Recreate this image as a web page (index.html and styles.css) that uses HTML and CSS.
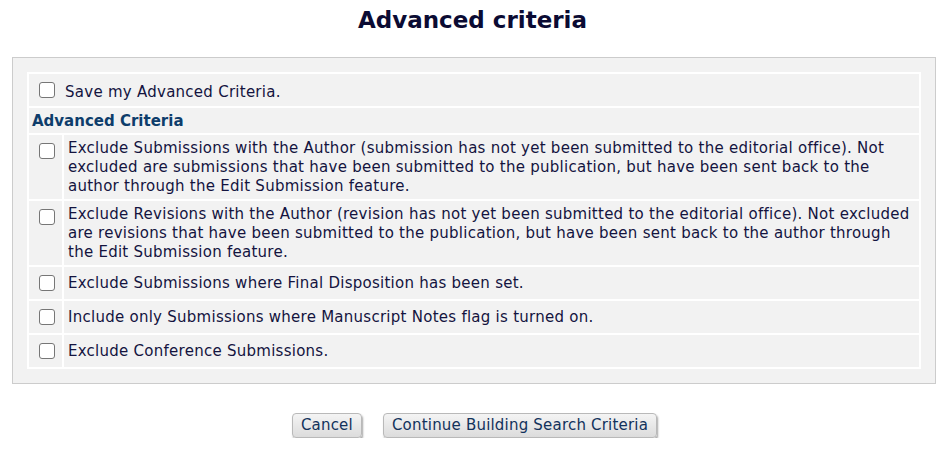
FILE: index.html
```html
<!DOCTYPE html>
<html lang="en">
<head>
  <meta charset="UTF-8">
  <title>Advanced criteria</title>
  <link rel="stylesheet" href="styles.css">
</head>
<body>
  <h1>Advanced criteria</h1>
  <div class="panel">
    <table class="criteria">
      <tr class="save-row">
        <td colspan="2"><label><input type="checkbox"> Save my Advanced Criteria.</label></td>
      </tr>
      <tr class="head-row">
        <td colspan="2">Advanced Criteria</td>
      </tr>
      <tr>
        <td class="box"><input type="checkbox"></td>
        <td>Exclude Submissions with the Author (submission has not yet been submitted to the editorial office). Not excluded are submissions that have been submitted to the publication, but have been sent back to the author through the Edit Submission feature.</td>
      </tr>
      <tr>
        <td class="box"><input type="checkbox"></td>
        <td>Exclude Revisions with the Author (revision has not yet been submitted to the editorial office). Not excluded are revisions that have been submitted to the publication, but have been sent back to the author through the Edit Submission feature.</td>
      </tr>
      <tr>
        <td class="box"><input type="checkbox"></td>
        <td>Exclude Submissions where Final Disposition has been set.</td>
      </tr>
      <tr>
        <td class="box"><input type="checkbox"></td>
        <td>Include only Submissions where Manuscript Notes flag is turned on.</td>
      </tr>
      <tr>
        <td class="box"><input type="checkbox"></td>
        <td>Exclude Conference Submissions.</td>
      </tr>
    </table>
  </div>
  <div class="actions">
    <button type="button">Cancel</button>
    <button type="button">Continue Building Search Criteria</button>
  </div>
</body>
</html>
```

FILE: styles.css
```css
body
{
  margin:0;
  font-family:"DejaVu Sans",Verdana,sans-serif;
  font-size:15px;
  letter-spacing:0.26px;
  color:#14143f;
  background-color:#fff;
}
h1
{
  margin:0;
  padding-top:7px;
  height:57px;
  box-sizing:border-box;
  text-align:center;
  font-size:23px;
  letter-spacing:0;
  color:#0b0b33;
}
.panel
{
  margin:0 9px 0 12px;
  border:1px solid #cccccc;
  background-color:#f2f2f2;
  padding:14px 14px 14px 14px;
}
table.criteria
{
  width:100%;
  border-collapse:collapse;
  border:2px solid #fff;
}
table.criteria td
{
  border-top:2px solid #fff;
  padding:4px 2px 3px 4px;
  line-height:19px;
  vertical-align:middle;
}
table.criteria .save-row td
{
  height:34px;
  box-sizing:border-box;
  padding:8px 10px 4px 10px;
}
table.criteria .head-row td
{
  height:27px;
  box-sizing:border-box;
  padding:3px 3px 2px;
  font-weight:bold;
  font-size:15px;
  letter-spacing:0;
  color:#0e3d6b;
}
table.criteria td.box
{
  width:16px;
  border-right:2px solid #fff;
  vertical-align:top;
  padding:8px 7px 8px 10px;
}
td.box input
{
  display:block;
}
input[type=checkbox]
{
  width:16px;
  height:16px;
  margin:0;
  appearance:none;
  border:1px solid #767676;
  border-radius:3px;
  background-color:#fff;
  vertical-align:-3px;
}
.save-row input
{
  margin-right:5px;
  vertical-align:-1px;
}
.actions
{
  text-align:center;
  padding-top:29px;
  padding-left:4px;
}
button
{
  font-family:"DejaVu Sans",Verdana,sans-serif;
  font-size:15px;
  letter-spacing:0.2px;
  line-height:17px;
  color:#12325c;
  padding:3px 8px 3px;
  margin:0 8px;
  border:1px solid #b9b9b9;
  border-radius:4px;
  background:linear-gradient(#f4f4f4,#dcdcdc);
  box-shadow:1px 2px 2px rgba(0,0,0,0.35);
  cursor:pointer;
}
```
